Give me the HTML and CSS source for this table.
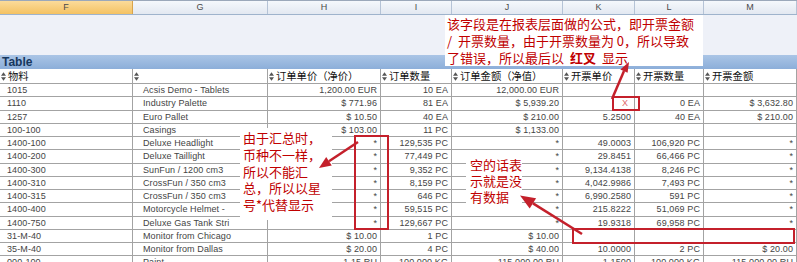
FILE: index.html
```html
<!DOCTYPE html>
<html lang="zh">
<head>
<meta charset="utf-8">
<title>Table</title>
<link rel="stylesheet" href="styles.css">
</head>
<body>
<div class="sheet">
  <div class="colhdr">
    <div class="ch sel">F</div><div class="ch">G</div><div class="ch">H</div><div class="ch">I</div>
    <div class="ch">J</div><div class="ch">K</div><div class="ch">L</div><div class="ch">M</div>
  </div>
  <div class="blank"></div>
  <div class="titlebar">Table</div>
  <div class="row head">
    <div class="c"><svg class="sort" viewBox="0 0 6 10"><path d="M0 4 3 0 6 4Z M0 6 3 10 6 6Z"/></svg>物料</div>
    <div class="c"><svg class="sort" viewBox="0 0 6 10"><path d="M0 4 3 0 6 4Z M0 6 3 10 6 6Z"/></svg></div>
    <div class="c"><svg class="sort" viewBox="0 0 6 10"><path d="M0 4 3 0 6 4Z M0 6 3 10 6 6Z"/></svg>订单单价（净价）</div>
    <div class="c"><svg class="sort" viewBox="0 0 6 10"><path d="M0 4 3 0 6 4Z M0 6 3 10 6 6Z"/></svg>订单数量</div>
    <div class="c"><svg class="sort" viewBox="0 0 6 10"><path d="M0 4 3 0 6 4Z M0 6 3 10 6 6Z"/></svg>订单金额（净值）</div>
    <div class="c"><svg class="sort" viewBox="0 0 6 10"><path d="M0 4 3 0 6 4Z M0 6 3 10 6 6Z"/></svg>开票单价</div>
    <div class="c"><svg class="sort" viewBox="0 0 6 10"><path d="M0 4 3 0 6 4Z M0 6 3 10 6 6Z"/></svg>开票数量</div>
    <div class="c"><svg class="sort" viewBox="0 0 6 10"><path d="M0 4 3 0 6 4Z M0 6 3 10 6 6Z"/></svg>开票金额</div>
  </div>
  <div class="row"><div class="c k">1015</div><div class="c t">Acsis Demo - Tablets</div><div class="c n">1,200.00 EUR</div><div class="c n">10 EA</div><div class="c n">12,000.00 EUR</div><div class="c n"></div><div class="c n"></div><div class="c n"></div></div>
  <div class="row"><div class="c k">1110</div><div class="c t">Industry Palette</div><div class="c n">$ 771.96</div><div class="c n">81 EA</div><div class="c n">$ 5,939.20</div><div class="c n err">X</div><div class="c n">0 EA</div><div class="c n">$ 3,632.80</div></div>
  <div class="row"><div class="c k">1257</div><div class="c t">Euro Pallet</div><div class="c n">$ 10.50</div><div class="c n">40 EA</div><div class="c n">$ 210.00</div><div class="c n">5.2500</div><div class="c n">40 EA</div><div class="c n">$ 210.00</div></div>
  <div class="row"><div class="c k">100-100</div><div class="c t">Casings</div><div class="c n">$ 103.00</div><div class="c n">11 PC</div><div class="c n">$ 1,133.00</div><div class="c n"></div><div class="c n"></div><div class="c n"></div></div>
  <div class="row"><div class="c k">1400-100</div><div class="c t">Deluxe Headlight</div><div class="c n">*</div><div class="c n">129,535 PC</div><div class="c n">*</div><div class="c n">49.0003</div><div class="c n">106,920 PC</div><div class="c n">*</div></div>
  <div class="row"><div class="c k">1400-200</div><div class="c t">Deluxe Taillight</div><div class="c n">*</div><div class="c n">77,449 PC</div><div class="c n">*</div><div class="c n">29.8451</div><div class="c n">66,466 PC</div><div class="c n">*</div></div>
  <div class="row"><div class="c k">1400-300</div><div class="c t">SunFun / 1200 cm3</div><div class="c n">*</div><div class="c n">9,352 PC</div><div class="c n">*</div><div class="c n">9,134.4138</div><div class="c n">8,246 PC</div><div class="c n">*</div></div>
  <div class="row"><div class="c k">1400-310</div><div class="c t">CrossFun / 350 cm3</div><div class="c n">*</div><div class="c n">8,159 PC</div><div class="c n">*</div><div class="c n">4,042.9986</div><div class="c n">7,493 PC</div><div class="c n">*</div></div>
  <div class="row"><div class="c k">1400-315</div><div class="c t">CrossFun / 350 cm3</div><div class="c n">*</div><div class="c n">646 PC</div><div class="c n">*</div><div class="c n">6,990.2580</div><div class="c n">591 PC</div><div class="c n">*</div></div>
  <div class="row"><div class="c k">1400-400</div><div class="c t">Motorcycle Helmet -</div><div class="c n">*</div><div class="c n">59,515 PC</div><div class="c n">*</div><div class="c n">215.8222</div><div class="c n">51,069 PC</div><div class="c n">*</div></div>
  <div class="row"><div class="c k">1400-750</div><div class="c t">Deluxe Gas Tank Stri</div><div class="c n">*</div><div class="c n">129,667 PC</div><div class="c n">*</div><div class="c n">19.9318</div><div class="c n">69,958 PC</div><div class="c n">*</div></div>
  <div class="row"><div class="c k">31-M-40</div><div class="c t">Monitor from Chicago</div><div class="c n">$ 10.00</div><div class="c n">1 PC</div><div class="c n">$ 10.00</div><div class="c n"></div><div class="c n"></div><div class="c n"></div></div>
  <div class="row"><div class="c k">35-M-40</div><div class="c t">Monitor from Dallas</div><div class="c n">$ 20.00</div><div class="c n">4 PC</div><div class="c n">$ 40.00</div><div class="c n">10.0000</div><div class="c n">2 PC</div><div class="c n">$ 20.00</div></div>
  <div class="row"><div class="c k">000-100</div><div class="c t">Paint</div><div class="c n">1.15 RU</div><div class="c n">100,000 KG</div><div class="c n">115,000.00 RU</div><div class="c n">1.1500</div><div class="c n">100,000 KG</div><div class="c n">115,000.00 RU</div></div>

  <div class="note note-top">该字段是在报表层面做的公式，即开票金额<br>/&nbsp;&nbsp;开票数量，由于开票数量为 0，所以导致<br>了错误，所以最后以<b>红叉</b>显示</div>
  <div class="note note-left">由于汇总时，<br>币种不一样，<br>所以不能汇<br>总，所以以星<br>号*代替显示</div>
  <div class="note note-mid">空的话表<br>示就是没<br>有数据</div>

  <svg class="marks" viewBox="0 0 797 262" width="797" height="262">
    <g fill="none" stroke="#c4202b" stroke-width="2">
      <rect x="613" y="97" width="26" height="13"/>
      <rect x="355" y="136" width="33" height="93"/>
      <rect x="573" y="229" width="221" height="14"/>
      <line x1="612" y1="99" x2="624" y2="71" stroke-width="2.5"/>
      <line x1="358" y1="142" x2="329" y2="161.3" stroke-width="2.5"/>
      <line x1="582" y1="234" x2="533" y2="203.4" stroke-width="2.5"/>
    </g>
    <g fill="#c4202b">
      <polygon points="629,62 627.6,72.7 620.3,69.5"/>
      <polygon points="319,168 331.8,165.5 326.2,157.1"/>
      <polygon points="520,195.5 536.1,198.3 529.7,208.5"/>
    </g>
  </svg>
</div>
</body>
</html>
```
FILE: styles.css
```css
* { box-sizing: border-box; }
html, body { margin: 0; padding: 0; background: #fff; }
body { width: 797px; height: 262px; overflow: hidden; }
.sheet {
  position: relative;
  width: 797px;
  height: 262px;
  overflow: hidden;
  --cols: 133px 135px 113px 71px 111px 72px 69px 93px;
  font-family: "Liberation Sans", Arial, sans-serif;
}
.colhdr {
  display: grid;
  grid-template-columns: var(--cols);
  height: 15px;
  border-top: 1px solid #9ba8ba;
  border-bottom: 1px solid #9eb3cc;
}
.ch {
  background: linear-gradient(#f5f8fc, #e2e8f1);
  border-right: 1px solid #b5c3d6;
  font-size: 9px;
  color: #4a4a4a;
  text-align: center;
  line-height: 13px;
}
.ch.sel {
  background: linear-gradient(#fbdb9a, #f4c263);
  border-right-color: #d9a44c;
}
.blank { height: 40px; background: #eef1f8; }
.titlebar {
  height: 14px;
  background: linear-gradient(#aac5e6, #8caed9);
  color: #17375e;
  font-weight: bold;
  font-size: 12px;
  line-height: 14px;
  padding-left: 2px;
}
.row {
  display: grid;
  grid-template-columns: var(--cols);
  height: 13.25px;
}
.row.head { height: 15px; }
.c {
  border-right: 1px solid #a3a3a3;
  border-bottom: 1px solid #a3a3a3;
  white-space: nowrap;
  overflow: hidden;
  font-size: 9px;
  letter-spacing: 0.1px;
  color: #444;
  line-height: 12.5px;
}
.head .c {
  font-family: "Noto Sans CJK SC", "Noto Sans", sans-serif;
  font-size: 10.3px;
  color: #111;
  line-height: 14px;
  display: flex;
  align-items: center;
  gap: 2px;
  padding-left: 1px;
  letter-spacing: 0;
}
.sort { width: 5px; height: 9px; fill: #555; flex: none; }
.k { padding-left: 7px; }
.t { padding-left: 10px; }
.n { text-align: right; padding-right: 3px; }
.err { color: #e06a6a; padding-right: 6px; }
.note {
  position: absolute;
  background: #fff;
  color: #c00000;
  font-family: "Noto Sans CJK SC", sans-serif;
  font-size: 13px;
  white-space: nowrap;
}
.note b { margin: 0 6px; }
.note-top {
  left: 445px; top: 15px; width: 258px; height: 51px;
  line-height: 17px; padding: 0 0 0 2px;
}
.note-left {
  left: 240px; top: 128px; width: 92px; height: 92px;
  line-height: 16.75px; padding: 2px 0 0 3px;
}
.note-mid {
  left: 466px; top: 153px; width: 56px; height: 55px;
  line-height: 16px; padding: 4px 0 0 4px;
}
.marks { position: absolute; left: 0; top: 0; }
```
